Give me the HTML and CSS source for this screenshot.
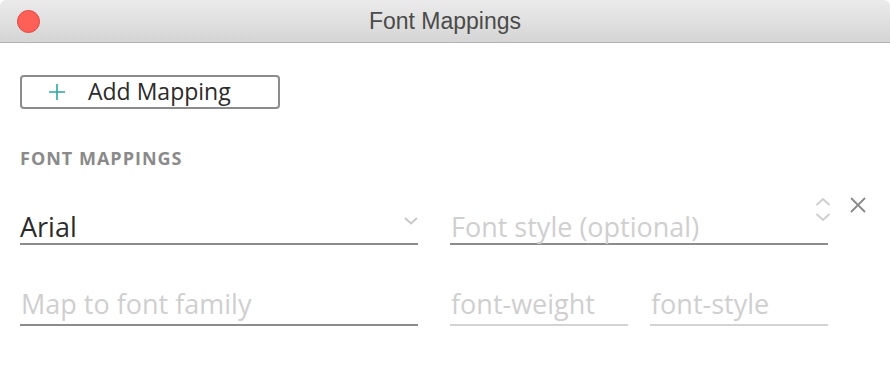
FILE: index.html
```html
<!DOCTYPE html>
<html lang="en">
  <head>
    <meta charset="UTF-8" />
    <title>Font Mappings</title>
    <link rel="stylesheet" href="styles.css">
  </head>
  <body>
    <div class="window">
      <div class="titlebar">
        <div class="lights"><span class="dot close"></span></div>
        <div class="title">Font Mappings</div>
        <div></div>
      </div>

      <div class="content">
        <button class="add-btn">
          <svg class="plus" width="16" height="16" viewBox="0 0 16 16">
            <path d="M8 0v16M0 8h16" stroke="#2aa9a0" stroke-width="1.6" fill="none" />
          </svg>
          <span>Add Mapping</span>
        </button>

        <h2 class="section">FONT MAPPINGS</h2>

        <div class="mapping">
          <div class="row top">
            <div class="field wide select">
              <span class="value">Arial</span>
              <svg class="chev" width="14" height="8" viewBox="0 0 14 8">
                <path d="M1 1l6 5.5L13 1" stroke="#c8c8c8" stroke-width="2" fill="none" />
              </svg>
            </div>
            <div class="field mid">
              <span class="placeholder">Font style (optional)</span>
            </div>
            <div class="tools">
              <svg class="spin" width="16" height="28" viewBox="0 0 16 28">
                <path d="M1.5 9l6.5-6 6.5 6" stroke="#cfcfcf" stroke-width="2" fill="none" />
                <path d="M1.5 18l6.5 6 6.5-6" stroke="#cfcfcf" stroke-width="2" fill="none" />
              </svg>
              <svg class="remove" width="16" height="16" viewBox="0 0 16 16">
                <path d="M1 1l14 14M15 1L1 15" stroke="#8a8a8a" stroke-width="1.8" fill="none" />
              </svg>
            </div>
          </div>

          <div class="row bottom">
            <div class="field wide">
              <span class="placeholder">Map to font family</span>
            </div>
            <div class="field small light">
              <span class="placeholder">font-weight</span>
            </div>
            <div class="field small light">
              <span class="placeholder">font-style</span>
            </div>
          </div>
        </div>
      </div>
    </div>
  </body>
</html>
```

FILE: styles.css
```css
html,
body {
  margin: 0;
  background: #fff;
}
body {
  font-family: "Open Sans", Lato, sans-serif;
  color: #333;
}
.window {
  width: 890px;
  height: 375px;
  overflow: hidden;
  background: #fff;
}

/* title bar */
.titlebar {
  height: 42px;
  display: grid;
  grid-template-columns: 1fr auto 1fr;
  align-items: center;
  background: linear-gradient(#ebebeb, #d5d5d5);
  border-bottom: 1px solid #b3b3b3;
  border-top-left-radius: 6px;
  border-top-right-radius: 6px;
}
.lights {
  padding-left: 17px;
  display: flex;
}
.dot {
  width: 23px;
  height: 23px;
  border-radius: 50%;
  box-sizing: border-box;
}
.close {
  background: #fe5f57;
  border: 1px solid #e2463f;
}
.title {
  font: 23px "Liberation Sans", Arial, sans-serif;
  color: #4b4b4b;
  padding-top: 1px;
}

/* content */
.content {
  padding: 32px 0 0 20px;
}
.add-btn {
  width: 260px;
  height: 34px;
  display: flex;
  align-items: center;
  gap: 23px;
  padding: 0 0 0 27px;
  background: #fff;
  border: 2px solid #8c8c8c;
  border-radius: 4px;
  font: 23px "Open Sans", sans-serif;
  color: #2b2b2b;
}
.add-btn span {
  line-height: 1;
  padding-bottom: 2px;
}
.section {
  margin: 38px 0 0;
  font-size: 18px;
  font-weight: bold;
  letter-spacing: 1px;
  color: #8a8a8a;
  line-height: 22px;
}

.mapping {
  margin-top: 20px;
}
.row {
  display: flex;
  align-items: flex-end;
}
.row.top {
  height: 56px;
  gap: 32px;
}
.row.bottom {
  height: 81px;
  gap: 22px;
}
.row.bottom .wide {
  margin-right: 10px;
}
.field {
  flex-shrink: 0;
  box-sizing: border-box;
  display: flex;
  align-items: flex-end;
  justify-content: space-between;
  border-bottom: 2px solid #8c8c8c;
  font-size: 27px;
  line-height: 1;
}
.row.top .field {
  padding-bottom: 3px;
}
.row.bottom .field {
  padding-bottom: 7px;
}
.field.light {
  border-bottom-color: #d3d3d3;
}
.wide {
  width: 398px;
}
.mid {
  width: 378px;
}
.small {
  width: 178px;
}
.value {
  color: #2b2b2b;
}
.placeholder {
  color: #cfcfcf;
  padding-left: 1px;
}
.chev {
  margin: 0 0 15px;
}
.select {
  height: 51px;
}
.tools {
  flex-shrink: 0;
  align-self: flex-start;
  display: flex;
  gap: 19px;
  margin-left: -45px;
  margin-top: 8px;
}
.spin {
  margin-top: -1px;
}
```
